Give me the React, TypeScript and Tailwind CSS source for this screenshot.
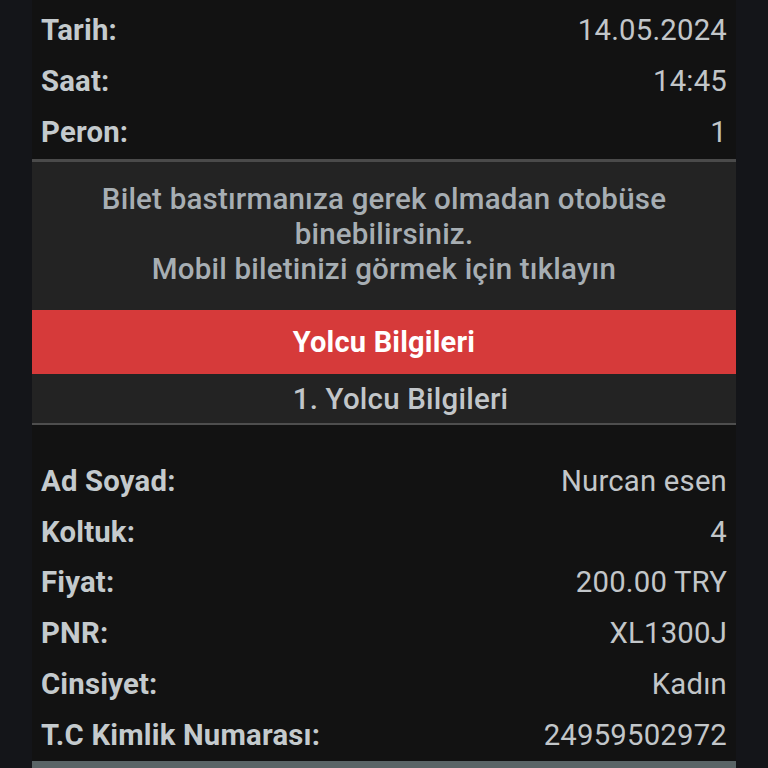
import React from "react";

const Row = ({ label, value }: { label: string; value: string }) => (
  <div className="flex h-[50.8px] items-center justify-between px-[9px]">
    <span className="font-bold text-[#c4cacd]">{label}</span>
    <span className="font-normal text-[#c2c6c9]">{value}</span>
  </div>
);

export default function App() {
  return (
    <div
      className="flex min-h-[768px] w-full justify-center bg-[#141519] px-[32px]"
      style={{ fontFamily: "Roboto, 'Noto Sans', sans-serif" }}
    >
      <div className="flex w-full flex-col bg-[#121212] text-[29.3px] tracking-[0.2px]">
        <div className="pt-[6px]">
          <Row label="Tarih:" value="14.05.2024" />
          <Row label="Saat:" value="14:45" />
          <Row label="Peron:" value="1" />
        </div>
        <div className="mt-[1px] border-t-[3px] border-[#4a4a4a] bg-[#232323]">
          <div className="flex h-[148px] flex-col items-center justify-center pb-[4px] text-center text-[29.5px] font-medium leading-[35px] text-[#a7aeb3]">
            <div>Bilet bastırmanıza gerek olmadan otobüse</div>
            <div>binebilirsiniz.</div>
            <div>Mobil biletinizi görmek için tıklayın</div>
          </div>
          <div className="flex h-[64px] items-center justify-center bg-[#d63a3a] text-[29px] font-bold text-white">
            Yolcu Bilgileri
          </div>
          <div className="flex h-[51px] items-center justify-center border-b-[2px] border-[#4e4e4e] pl-[33px] text-[29.5px] font-medium text-[#c2c6c9]">
            1. Yolcu Bilgileri
          </div>
        </div>
        <div className="pt-[31px]">
          <Row label="Ad Soyad:" value="Nurcan esen" />
          <Row label="Koltuk:" value="4" />
          <Row label="Fiyat:" value="200.00 TRY" />
          <Row label="PNR:" value="XL1300J" />
          <Row label="Cinsiyet:" value="Kadın" />
          <Row label="T.C Kimlik Numarası:" value="24959502972" />
        </div>
        <div className="mt-[0px] h-[8px] bg-[#5a6466]" />
      </div>
    </div>
  );
}
